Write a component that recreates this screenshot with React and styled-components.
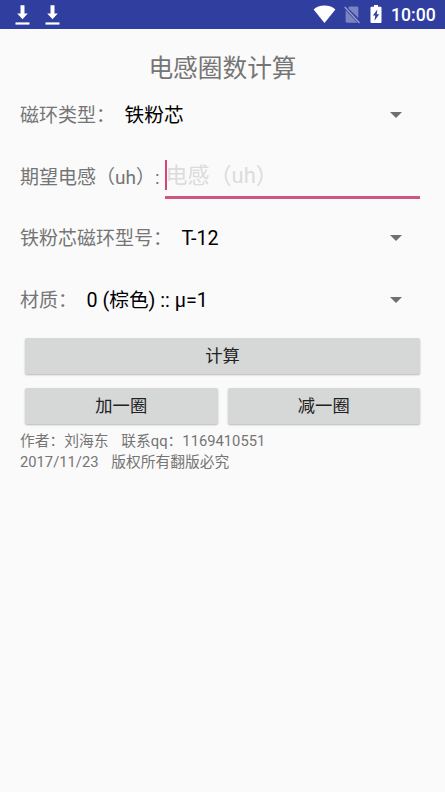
import React from 'react';
import styled, { createGlobalStyle } from 'styled-components';

const GlobalStyle = createGlobalStyle`
  * {
    box-sizing: border-box;
  }

  body {
    margin: 0;
    background: #fafafa;
    font-family: Roboto, 'Noto Sans CJK SC', sans-serif;
    color: #757575;
  }
`;

const Screen = styled.div`
  display: flex;
  flex-direction: column;
  height: 792px;
  overflow: hidden;
  background: #fafafa;
`;

const StatusBar = styled.header`
  display: flex;
  justify-content: space-between;
  height: 29px;
  padding: 0 9px 0 15px;
  background: #303f9f;
  color: #fff;
`;

const StatusGroup = styled.div`
  display: flex;
  gap: ${({ $gap }) => $gap}px;

  svg {
    display: block;
  }
`;

const Clock = styled.span`
  width: 45px;
  margin-left: 1px;
  font-size: 17.6px;
  font-weight: 500;
  line-height: 31px;
  white-space: nowrap;
`;

const Content = styled.main`
  display: flex;
  flex-direction: column;
  padding: 21px 20px 0;
`;

const Title = styled.h1`
  margin: 0;
  height: 35px;
  font-size: 24.7px;
  font-weight: 400;
  line-height: 37px;
  text-align: center;
`;

const FormRow = styled.div`
  display: flex;
  align-items: center;
  height: 61.7px;
  padding-right: 5px;
`;

const Label = styled.label`
  flex: none;
  font-size: 19px;
  line-height: 28px;
  white-space: nowrap;
`;

const Spinner = styled.div`
  flex: 1;
  display: flex;
  align-items: center;
  justify-content: space-between;
  padding: 0 18px 0 9.5px;
  font-size: 19.7px;
  line-height: 28px;
  color: #000;
  white-space: nowrap;
`;

const Arrow = styled.span`
  margin-top: -2px;
  border: 6.5px solid transparent;
  border-top-color: #6f6f6f;
  border-bottom: 0;
`;

const Field = styled.div`
  flex: 1;
  display: flex;
  align-items: center;
  min-width: 0;
  height: 39px;
  margin: 4px 0 0 5px;
  padding-bottom: 6px;
  border-bottom: 3px solid #d05585;
`;

const Caret = styled.span`
  flex: none;
  width: 2px;
  height: 30px;
  background: #d8437c;
`;

const FieldInput = styled.input`
  flex: 1;
  min-width: 0;
  height: 30px;
  margin-left: -1px;
  padding: 0;
  border: 0;
  outline: 0;
  background: transparent;
  font-family: inherit;
  font-size: 22px;
  color: #000;

  &::placeholder {
    color: #dcdcdc;
    opacity: 1;
  }
`;

const ButtonRow = styled.div`
  display: flex;
  gap: 10px;
  padding: 0 5px;
  margin-top: ${({ $top }) => $top}px;
`;

const Button = styled.button`
  flex: 1;
  height: 36px;
  padding: 0;
  border: 0;
  border-radius: 2px;
  background: #d6d7d7;
  box-shadow: 0 1px 2px rgba(0, 0, 0, 0.28);
  font-family: inherit;
  font-size: 17.3px;
  line-height: 36px;
  color: #212121;
`;

const Footer = styled.footer`
  margin-top: 7px;
  font-size: 14.75px;
  line-height: 21px;
  word-spacing: -0.45px;
  white-space: pre;
`;

const DownloadIcon = () => (
  <svg width="15" height="29" viewBox="0 0 15 29" fill="#fff">
    <path d="M5.5 5.3h4v8.2h3.3L7.5 19.3l-5.3-5.8h3.3z" />
    <path d="M.5 22.4h14v2.2H.5z" />
  </svg>
);

const WifiIcon = () => (
  <svg width="23" height="29" viewBox="0 0 23 29" fill="#fff">
    <path d="M.6 9.5C3.2 7 7 5.6 11.5 5.6S19.8 7 22.4 9.5L11.5 22.9z" />
  </svg>
);

const NoSimIcon = () => (
  <svg width="18" height="29" viewBox="0 0 18 29">
    <g fill="#fff" opacity="0.36">
      <path d="M5.5 6.5H13q1.3 0 1.3 1.3V18L4 8z" />
      <path d="M1.6 10.3L13.5 22.7H3q-1.4 0-1.4-1.4z" />
    </g>
    <path d="M.7 7L15.5 23" stroke="#fff" strokeOpacity="0.5" strokeWidth="1.3" />
  </svg>
);

const BatteryIcon = () => (
  <svg width="12" height="29" viewBox="0 0 12 29">
    <path
      fill="#fff"
      d="M4 5h4v1.8h2.6q.9 0 .9.9v14.4q0 .9-.9.9H1.4q-.9 0-.9-.9V7.7q0-.9.9-.9H4z"
    />
    <path fill="#303f9f" d="M7.4 9.5L2.9 15.6h2.4L4.5 20.8l4.7-6.6H6.7z" />
  </svg>
);

const SelectRow = ({ label, value }) => (
  <FormRow>
    <Label>{label}</Label>
    <Spinner>
      {value}
      <Arrow />
    </Spinner>
  </FormRow>
);

const App = () => {
  return (
    <>
      <GlobalStyle />
      <Screen>
        <StatusBar>
          <StatusGroup $gap={15}>
            <DownloadIcon />
            <DownloadIcon />
          </StatusGroup>
          <StatusGroup $gap={8}>
            <WifiIcon />
            <NoSimIcon />
            <BatteryIcon />
            <Clock>10:00</Clock>
          </StatusGroup>
        </StatusBar>
        <Content>
          <Title>电感圈数计算</Title>
          <SelectRow label="磁环类型：" value="铁粉芯" />
          <FormRow>
            <Label htmlFor="inductance">期望电感（uh）:</Label>
            <Field>
              <Caret />
              <FieldInput id="inductance" placeholder="电感（uh）" />
            </Field>
          </FormRow>
          <SelectRow label="铁粉芯磁环型号：" value="T-12" />
          <SelectRow label="材质：" value="0 (棕色) :: μ=1" />
          <ButtonRow $top={6}>
            <Button>计算</Button>
          </ButtonRow>
          <ButtonRow $top={14}>
            <Button>加一圈</Button>
            <Button>减一圈</Button>
          </ButtonRow>
          <Footer>
            <div>{'作者：刘海东    联系qq：1169410551'}</div>
            <div>{'2017/11/23    版权所有翻版必究'}</div>
          </Footer>
        </Content>
      </Screen>
    </>
  );
};

export default App;
